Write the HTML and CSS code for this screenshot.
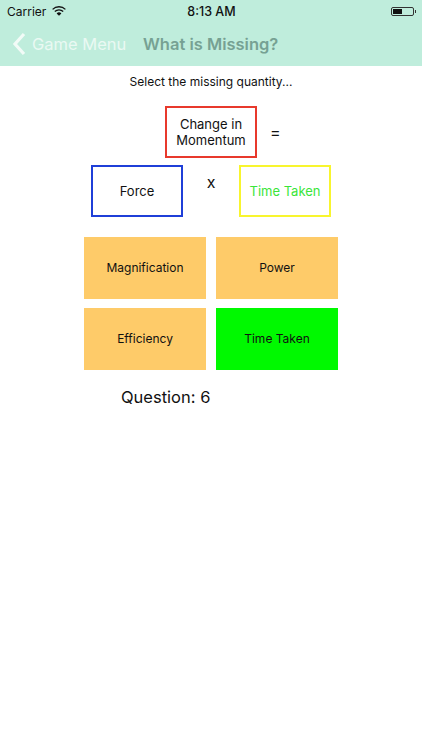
FILE: index.html
```html
<!DOCTYPE html>
<html>
  <head>
    <title>What is Missing?</title>
    <link rel="stylesheet" href="styles.css">
  </head>
  <body>
    <div class="header">
      <div class="status-bar">
        <div class="status-left">
          <span>Carrier</span>
          <svg class="wifi" width="14" height="10" viewBox="0 0 14 10">
            <path d="M0.6 3.4 A9 9 0 0 1 13.4 3.4" fill="none" stroke="#111" stroke-width="1.3"/>
            <path d="M2.8 5.5 A6 6 0 0 1 11.2 5.5" fill="none" stroke="#111" stroke-width="1.3"/>
            <path d="M4.6 7.4 A3.4 3.4 0 0 1 9.4 7.4 L7 9.8 Z" fill="#111"/>
          </svg>
        </div>
        <div class="status-time">8:13 AM</div>
        <div class="status-right">
          <div class="battery"><div class="battery-level"></div></div>
          <div class="battery-tip"></div>
        </div>
      </div>
      <div class="nav-bar">
        <svg class="back-icon" width="14" height="24" viewBox="0 0 14 24">
          <path d="M12 2 L3 12 L12 22" fill="none" stroke="#f2fbf7" stroke-width="3.2"/>
        </svg>
        <span class="back-text">Game Menu</span>
        <span class="nav-title">What is Missing?</span>
      </div>
    </div>

    <p class="prompt">Select the missing quantity...</p>

    <div class="equation-top">
      <div class="box box-red">Change in Momentum</div>
      <span class="equals">=</span>
    </div>
    <div class="equation-bottom">
      <div class="box box-blue">Force</div>
      <span class="times">x</span>
      <div class="box box-yellow">Time Taken</div>
    </div>

    <div class="options">
      <div class="option">Magnification</div>
      <div class="option">Power</div>
      <div class="option">Efficiency</div>
      <div class="option correct">Time Taken</div>
    </div>

    <p class="question">Question: 6</p>
  </body>
</html>
```

FILE: styles.css
```css
body {
  margin: 0;
  background: #fff;
  color: #111;
  font-family: Inter, "Liberation Sans", sans-serif;
  overflow: hidden;
}

.header {
  height: 66px;
  background: #bfeddc;
}

.status-bar {
  display: flex;
  justify-content: space-between;
  align-items: center;
  height: 22px;
  padding: 0 6px 0 7px;
  font-size: 12px;
}

.status-left {
  display: flex;
  align-items: center;
  gap: 6px;
  width: 150px;
}

.status-time {
  font-weight: 500;
  font-size: 12.5px;
}

.status-right {
  display: flex;
  align-items: center;
  justify-content: flex-end;
  width: 150px;
}

.battery {
  width: 23px;
  height: 9px;
  border: 1px solid #333;
  border-radius: 2px;
  padding: 1px;
  box-sizing: border-box;
}

.battery-level {
  width: 9px;
  height: 100%;
  background: #111;
}

.battery-tip {
  width: 1px;
  height: 3px;
  margin-left: 1px;
  background: #333;
}

.nav-bar {
  display: flex;
  align-items: center;
  height: 44px;
  padding-left: 12px;
  font-size: 16.5px;
}

.back-icon {
  margin-right: 6px;
}

.back-text {
  color: #eaf9f3;
  width: 111px;
}

.nav-title {
  color: #76a193;
  font-weight: 600;
}

.prompt {
  margin: 8px 0 0;
  height: 16px;
  line-height: 16px;
  font-size: 12px;
  text-align: center;
}

.box {
  display: flex;
  justify-content: center;
  align-items: center;
  box-sizing: border-box;
  width: 92px;
  border: 2px solid;
  font-size: 13px;
  line-height: 16px;
  text-align: center;
}

.equation-top {
  display: flex;
  align-items: center;
  margin: 16px 0 0 165px;
}

.box-red {
  height: 52px;
  border-color: #e8392c;
}

.equals {
  margin-left: 13px;
  font-size: 16px;
}

.equation-bottom {
  display: flex;
  margin: 7px 0 0 91px;
}

.box-blue {
  height: 52px;
  border-color: #1f3fd8;
}

.times {
  width: 56px;
  margin-top: 7px;
  font-size: 16px;
  text-align: center;
}

.box-yellow {
  height: 52px;
  border-color: #f8f52e;
  color: #3ae53a;
}

.options {
  display: grid;
  grid-template-columns: 122px 122px;
  grid-auto-rows: 61.5px;
  gap: 9.5px 10px;
  margin: 20px 0 0 84px;
}

.option {
  display: flex;
  justify-content: center;
  align-items: center;
  background: #fecb69;
  font-size: 12px;
}

.correct {
  background: #00f900;
}

.question {
  margin: 16px 0 0 121px;
  font-size: 16.5px;
  line-height: 22px;
}
```
